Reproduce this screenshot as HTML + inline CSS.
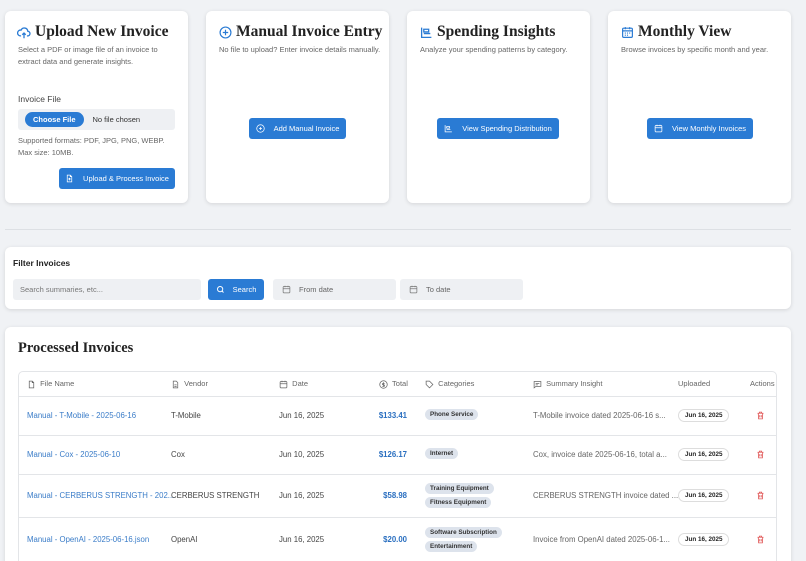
<!DOCTYPE html>
<html><head><style>
*{box-sizing:border-box;margin:0;padding:0}
html,body{width:806px;height:561px;overflow:hidden}
body{background:#f0f2f5;font-family:"Liberation Sans",sans-serif;color:#444;position:relative}
.card{position:absolute;background:#fff;border-radius:6px;box-shadow:0 1px 4px rgba(0,0,0,.12)}
.h{font-family:"Liberation Serif",serif;font-weight:bold;font-size:15.5px;color:#222;position:absolute;white-space:nowrap}
.d{position:absolute;font-size:7.5px;color:#666;line-height:12px}
.btn{position:absolute;background:#2a7bd4;color:#fff;border-radius:3px;font-size:7.5px;display:flex;align-items:center;justify-content:center;gap:9px}
.ico{display:inline-block;vertical-align:middle}
.abs{position:absolute}
.inp{position:absolute;background:#eef0f3;border-radius:3px;font-size:7.5px;color:#666;display:flex;align-items:center}
.th{position:absolute;top:379px;font-size:7.5px;color:#666;white-space:nowrap}
.row{position:absolute;left:18px;width:759px;border-top:1px solid #e3e5e8}
.c{position:absolute;font-size:7.8px;white-space:nowrap}
.tag{display:inline-block;background:#dde3ec;border-radius:8px;font-size:6.3px;font-weight:bold;color:#333;padding:2px 5px}
.pill{position:absolute;left:678px;border:1px solid #ddd;border-radius:8px;font-size:6.3px;font-weight:bold;padding:2px 6px;color:#222}
</style></head><body>

<div class="card" style="left:5px;top:11px;width:183px;height:192px"></div>
<div class="card" style="left:206px;top:11px;width:183px;height:192px"></div>
<div class="card" style="left:407px;top:11px;width:183px;height:192px"></div>
<div class="card" style="left:608px;top:11px;width:183px;height:192px"></div>

<svg class="abs" style="left:17px;top:26px" width="14" height="14" viewBox="0 0 24 24" fill="none" stroke="#2a7bd4" stroke-width="2.2"><path d="M7 17H6a5 5 0 1 1 1-9.9A6 6 0 0 1 18.5 9 4 4 0 0 1 18 17h-1M12 12v9M9 15l3-3 3 3"/></svg>
<div class="h" style="left:35px;top:23px">Upload New Invoice</div>
<div class="d" style="left:18px;top:44px;width:160px">Select a PDF or image file of an invoice to extract data and generate insights.</div>
<div class="d" style="left:18px;top:93px;font-size:8.5px;color:#444">Invoice File</div>
<div class="inp" style="left:18px;top:109px;width:157px;height:21px"><span style="background:#2a7bd4;color:#fff;font-weight:bold;border-radius:9px;padding:3px 8px;margin-left:7px;font-size:7.5px">Choose File</span><span style="margin-left:9px;color:#333">No file chosen</span></div>
<div class="d" style="left:18px;top:135px;width:155px">Supported formats: PDF, JPG, PNG, WEBP. Max size: 10MB.</div>
<div class="btn" style="left:59px;top:168px;width:116px;height:21px"><svg width="9" height="9" viewBox="0 0 24 24" fill="none" stroke="#fff" stroke-width="2"><path d="M14 3H6v18h12V7zM14 3v4h4M12 17v-6M9 14l3-3 3 3"/></svg>Upload &amp; Process Invoice</div>

<svg class="abs" style="left:219px;top:26px" width="13" height="13" viewBox="0 0 24 24" fill="none" stroke="#2a7bd4" stroke-width="2.2"><circle cx="12" cy="12" r="10"/><path d="M12 7v10M7 12h10"/></svg>
<div class="h" style="left:236px;top:23px">Manual Invoice Entry</div>
<div class="d" style="left:219px;top:44px">No file to upload? Enter invoice details manually.</div>
<div class="btn" style="left:249px;top:118px;width:97px;height:21px"><svg width="9" height="9" viewBox="0 0 24 24" fill="none" stroke="#fff" stroke-width="2"><circle cx="12" cy="12" r="10"/><path d="M12 8v8M8 12h8"/></svg>Add Manual Invoice</div>

<svg class="abs" style="left:420px;top:26px" width="13" height="13" viewBox="0 0 24 24" fill="none" stroke="#2a7bd4" stroke-width="2.4"><path d="M3 3v18h18M7 6h9v5H7zM7 14h12"/></svg>
<div class="h" style="left:437px;top:23px">Spending Insights</div>
<div class="d" style="left:420px;top:44px">Analyze your spending patterns by category.</div>
<div class="btn" style="left:437px;top:118px;width:122px;height:21px"><svg width="9" height="9" viewBox="0 0 24 24" fill="none" stroke="#fff" stroke-width="2"><path d="M3 3v18h18M7 7h8v4H7zM7 15h10"/></svg>View Spending Distribution</div>

<svg class="abs" style="left:621px;top:26px" width="13" height="13" viewBox="0 0 24 24" fill="none" stroke="#2a7bd4" stroke-width="2.2"><rect x="3" y="4" width="18" height="17" rx="2"/><path d="M3 9h18M8 2v4M16 2v4M7 13h2M11 13h2M15 13h2M7 17h2M11 17h2"/></svg>
<div class="h" style="left:638px;top:23px">Monthly View</div>
<div class="d" style="left:621px;top:44px">Browse invoices by specific month and year.</div>
<div class="btn" style="left:647px;top:118px;width:106px;height:21px"><svg width="9" height="9" viewBox="0 0 24 24" fill="none" stroke="#fff" stroke-width="2"><rect x="3" y="4" width="18" height="17" rx="2"/><path d="M3 10h18M8 2v4M16 2v4"/></svg>View Monthly Invoices</div>

<div class="abs" style="left:5px;top:229px;width:786px;height:1px;background:#dde0e4"></div>

<div class="card" style="left:5px;top:247px;width:786px;height:62px"></div>
<div class="abs" style="left:13px;top:258px;font-size:8.5px;font-weight:bold;color:#222">Filter Invoices</div>
<div class="inp" style="left:13px;top:279px;width:188px;height:21px;padding-left:7px;color:#777">Search summaries, etc...</div>
<div class="btn" style="left:208px;top:279px;width:56px;height:21px;gap:8px"><svg width="9" height="9" viewBox="0 0 24 24" fill="none" stroke="#fff" stroke-width="2.5"><circle cx="11" cy="11" r="7"/><path d="M20 20l-4-4"/></svg>Search</div>
<div class="inp" style="left:273px;top:279px;width:123px;height:21px;padding-left:9px"><svg width="9" height="9" viewBox="0 0 24 24" fill="none" stroke="#777" stroke-width="2"><rect x="3" y="4" width="18" height="17" rx="2"/><path d="M3 10h18M8 2v4M16 2v4"/></svg><span style="margin-left:8px">From date</span></div>
<div class="inp" style="left:400px;top:279px;width:123px;height:21px;padding-left:9px"><svg width="9" height="9" viewBox="0 0 24 24" fill="none" stroke="#777" stroke-width="2"><rect x="3" y="4" width="18" height="17" rx="2"/><path d="M3 10h18M8 2v4M16 2v4"/></svg><span style="margin-left:8px">To date</span></div>

<div class="card" style="left:5px;top:327px;width:786px;height:240px"></div>
<div class="h" style="left:18px;top:340px;font-size:14.5px">Processed Invoices</div>
<div class="abs" style="left:18px;top:371px;width:759px;height:200px;border:1px solid #e3e5e8;border-radius:5px"></div>

<div class="th" style="left:27px"><svg class="ico" width="9" height="9" viewBox="0 0 24 24" fill="none" stroke="#666" stroke-width="2"><path d="M14 3H6v18h12V7zM14 3v4h4"/></svg>&nbsp; File Name</div>
<div class="th" style="left:171px"><svg class="ico" width="9" height="9" viewBox="0 0 24 24" fill="none" stroke="#666" stroke-width="2"><path d="M14 3H6v18h12V7zM9 13h6M9 17h6"/></svg>&nbsp; Vendor</div>
<div class="th" style="left:279px"><svg class="ico" width="9" height="9" viewBox="0 0 24 24" fill="none" stroke="#666" stroke-width="2"><rect x="3" y="4" width="18" height="17" rx="2"/><path d="M3 10h18M8 2v4M16 2v4"/></svg>&nbsp; Date</div>
<div class="th" style="left:379px"><svg class="ico" width="9" height="9" viewBox="0 0 24 24" fill="none" stroke="#666" stroke-width="2"><circle cx="12" cy="12" r="10"/><path d="M12 6v12M15 9h-4a2 2 0 0 0 0 4h2a2 2 0 0 1 0 4H9"/></svg>&nbsp; Total</div>
<div class="th" style="left:425px"><svg class="ico" width="9" height="9" viewBox="0 0 24 24" fill="none" stroke="#666" stroke-width="2"><path d="M3 3h9l9 9-9 9-9-9z"/></svg>&nbsp; Categories</div>
<div class="th" style="left:533px"><svg class="ico" width="9" height="9" viewBox="0 0 24 24" fill="none" stroke="#666" stroke-width="2"><path d="M3 4h18v13H8l-5 4zM7 9h10M7 13h6"/></svg>&nbsp; Summary Insight</div>
<div class="th" style="left:678px">Uploaded</div>
<div class="th" style="left:750px">Actions</div>

<div class="row" style="top:396px"></div>
<div class="row" style="top:435px"></div>
<div class="row" style="top:474px"></div>
<div class="row" style="top:517px"></div>

<div class="c" style="left:27px;top:411px;color:#3a7cc8">Manual - T-Mobile - 2025-06-16</div>
<div class="c" style="left:171px;top:411px">T-Mobile</div>
<div class="c" style="left:279px;top:411px">Jun 16, 2025</div>
<div class="c" style="left:370px;top:411px;width:37px;text-align:right;color:#2a6fc0;font-weight:bold">$133.41</div>
<div class="c" style="left:425px;top:409px"><span class="tag">Phone Service</span></div>
<div class="c" style="left:533px;top:411px;color:#666">T-Mobile invoice dated 2025-06-16 s...</div>
<div class="pill" style="top:409px">Jun 16, 2025</div>

<div class="c" style="left:27px;top:450px;color:#3a7cc8">Manual - Cox - 2025-06-10</div>
<div class="c" style="left:171px;top:450px">Cox</div>
<div class="c" style="left:279px;top:450px">Jun 10, 2025</div>
<div class="c" style="left:370px;top:450px;width:37px;text-align:right;color:#2a6fc0;font-weight:bold">$126.17</div>
<div class="c" style="left:425px;top:448px"><span class="tag">Internet</span></div>
<div class="c" style="left:533px;top:450px;color:#666">Cox, invoice date 2025-06-16, total a...</div>
<div class="pill" style="top:448px">Jun 16, 2025</div>

<div class="c" style="left:27px;top:491px;color:#3a7cc8">Manual - CERBERUS STRENGTH - 202...</div>
<div class="c" style="left:171px;top:491px">CERBERUS STRENGTH</div>
<div class="c" style="left:279px;top:491px">Jun 16, 2025</div>
<div class="c" style="left:370px;top:491px;width:37px;text-align:right;color:#2a6fc0;font-weight:bold">$58.98</div>
<div class="c" style="left:425px;top:483px"><span class="tag">Training Equipment</span></div>
<div class="c" style="left:425px;top:497px"><span class="tag">Fitness Equipment</span></div>
<div class="c" style="left:533px;top:491px;color:#666">CERBERUS STRENGTH invoice dated ...</div>
<div class="pill" style="top:489px">Jun 16, 2025</div>

<div class="c" style="left:27px;top:535px;color:#3a7cc8">Manual - OpenAI - 2025-06-16.json</div>
<div class="c" style="left:171px;top:535px">OpenAI</div>
<div class="c" style="left:279px;top:535px">Jun 16, 2025</div>
<div class="c" style="left:370px;top:535px;width:37px;text-align:right;color:#2a6fc0;font-weight:bold">$20.00</div>
<div class="c" style="left:425px;top:527px"><span class="tag">Software Subscription</span></div>
<div class="c" style="left:425px;top:541px"><span class="tag">Entertainment</span></div>
<div class="c" style="left:533px;top:535px;color:#666">Invoice from OpenAI dated 2025-06-1...</div>
<div class="pill" style="top:533px">Jun 16, 2025</div>

<svg class="abs" style="left:756px;top:411px" width="9" height="9" viewBox="0 0 24 24" fill="none" stroke="#e05555" stroke-width="2.2"><path d="M4 6h16M9 6V3h6v3M6 6l1 15h10l1-15M10 11v6M14 11v6"/></svg>
<svg class="abs" style="left:756px;top:450px" width="9" height="9" viewBox="0 0 24 24" fill="none" stroke="#e05555" stroke-width="2.2"><path d="M4 6h16M9 6V3h6v3M6 6l1 15h10l1-15M10 11v6M14 11v6"/></svg>
<svg class="abs" style="left:756px;top:491px" width="9" height="9" viewBox="0 0 24 24" fill="none" stroke="#e05555" stroke-width="2.2"><path d="M4 6h16M9 6V3h6v3M6 6l1 15h10l1-15M10 11v6M14 11v6"/></svg>
<svg class="abs" style="left:756px;top:535px" width="9" height="9" viewBox="0 0 24 24" fill="none" stroke="#e05555" stroke-width="2.2"><path d="M4 6h16M9 6V3h6v3M6 6l1 15h10l1-15M10 11v6M14 11v6"/></svg>

</body></html>
